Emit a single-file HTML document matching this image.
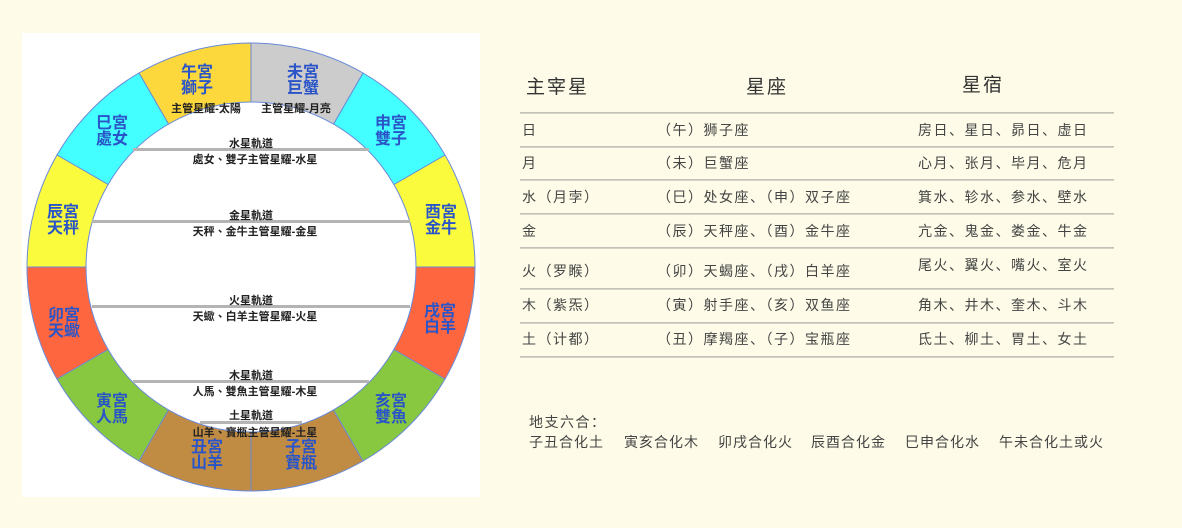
<!DOCTYPE html>
<html><head><meta charset="utf-8"><style>
html,body{margin:0;padding:0}
body{width:1182px;height:528px;background:#fefce8;position:relative;overflow:hidden;font-family:"Liberation Sans","Noto Sans CJK SC",sans-serif}
.wb{position:absolute;left:22px;top:33px;width:458px;height:464px;background:#fff}
svg{position:absolute;left:0;top:0}
.t{position:absolute;color:#444;font-size:14px;white-space:nowrap;letter-spacing:1.5px;font-family:"Liberation Sans","Noto Sans CJK SC",sans-serif}
.b{position:absolute;color:#444;font-size:14px;white-space:nowrap;letter-spacing:1px;top:432px}
.h{position:absolute;font-size:19px;color:#333;letter-spacing:2px;font-family:"Liberation Sans","Noto Sans CJK SC",sans-serif}
.ln{position:absolute;left:520px;width:594px;height:2px;background:linear-gradient(#b8b8b0,#e0ded0)}
</style></head><body>
<div class="wb"></div>
<svg width="500" height="528" viewBox="0 0 500 528" font-family="Liberation Sans, Noto Sans CJK TC, sans-serif">
<g stroke="#6a8ad8" stroke-width="1">
<path d="M475,267 A224,224 0 0 0 445,155 L393.9,184.5 A165,165 0 0 1 416,267Z" fill="#fbfb3e"/>
<path d="M445,155 A224,224 0 0 0 363,73 L333.5,124.1 A165,165 0 0 1 393.9,184.5Z" fill="#44ffff"/>
<path d="M363,73 A224,224 0 0 0 251,43 L251,102 A165,165 0 0 1 333.5,124.1Z" fill="#cccccc"/>
<path d="M251,43 A224,224 0 0 0 139,73 L168.5,124.1 A165,165 0 0 1 251,102Z" fill="#fdd83c"/>
<path d="M139,73 A224,224 0 0 0 57,155 L108.1,184.5 A165,165 0 0 1 168.5,124.1Z" fill="#44ffff"/>
<path d="M57,155 A224,224 0 0 0 27,267 L86,267 A165,165 0 0 1 108.1,184.5Z" fill="#fbfb3e"/>
<path d="M27,267 A224,224 0 0 0 57,379 L108.1,349.5 A165,165 0 0 1 86,267Z" fill="#fe6640"/>
<path d="M57,379 A224,224 0 0 0 139,461 L168.5,409.9 A165,165 0 0 1 108.1,349.5Z" fill="#88c840"/>
<path d="M139,461 A224,224 0 0 0 251,491 L251,432 A165,165 0 0 1 168.5,409.9Z" fill="#c08c44"/>
<path d="M251,491 A224,224 0 0 0 363,461 L333.5,409.9 A165,165 0 0 1 251,432Z" fill="#c08c44"/>
<path d="M363,461 A224,224 0 0 0 445,379 L393.9,349.5 A165,165 0 0 1 333.5,409.9Z" fill="#88c840"/>
<path d="M445,379 A224,224 0 0 0 475,267 L416,267 A165,165 0 0 1 393.9,349.5Z" fill="#fe6640"/>
</g>
<g fill="#b4b4b4">
<rect x="133" y="148" width="236" height="3"/>
<rect x="92" y="220" width="318" height="3"/>
<rect x="92" y="305" width="318" height="3"/>
<rect x="133" y="380" width="236" height="3"/>
<rect x="200" y="421" width="102" height="3"/>
</g>
<g fill="#2a55c8" font-size="16" font-weight="bold" text-anchor="middle">
<text x="441" y="217">酉宮</text><text x="441" y="233">金牛</text>
<text x="391" y="128">申宮</text><text x="391" y="144">雙子</text>
<text x="303" y="77">未宮</text><text x="303" y="93">巨蟹</text>
<text x="197" y="77">午宮</text><text x="197" y="93">獅子</text>
<text x="112" y="128">巳宮</text><text x="112" y="144">處女</text>
<text x="63" y="217">辰宮</text><text x="63" y="233">天秤</text>
<text x="64" y="320">卯宮</text><text x="64" y="336">天蠍</text>
<text x="112" y="406">寅宮</text><text x="112" y="422">人馬</text>
<text x="207" y="452">丑宮</text><text x="207" y="468">山羊</text>
<text x="301" y="452">子宮</text><text x="301" y="468">寶瓶</text>
<text x="391" y="406">亥宮</text><text x="391" y="422">雙魚</text>
<text x="440" y="316">戌宮</text><text x="440" y="332">白羊</text>
</g>
<g fill="#222" font-size="11" font-weight="bold" text-anchor="middle">
<text x="206" y="112">主管星耀-太陽</text><text x="296" y="112">主管星耀-月亮</text>
<text x="251" y="147">水星軌道</text><text x="255" y="163">處女、雙子主管星耀-水星</text>
<text x="251" y="219">金星軌道</text><text x="255" y="235">天秤、金牛主管星耀-金星</text>
<text x="251" y="304">火星軌道</text><text x="255" y="320">天蠍、白羊主管星耀-火星</text>
<text x="251" y="379">木星軌道</text><text x="255" y="395">人馬、雙魚主管星耀-木星</text>
<text x="251" y="419">土星軌道</text><text x="255" y="436">山羊、寶瓶主管星耀-土星</text>
</g>
</svg>

<div class="h" style="left:526px;top:72px">主宰星</div>
<div class="h" style="left:746px;top:72px">星座</div>
<div class="h" style="left:962px;top:70px">星宿</div>

<div class="ln" style="top:112px"></div>
<div class="ln" style="top:146px"></div>
<div class="ln" style="top:179px"></div>
<div class="ln" style="top:213px"></div>
<div class="ln" style="top:247px"></div>
<div class="ln" style="top:288px"></div>
<div class="ln" style="top:322px"></div>
<div class="ln" style="top:356px"></div>

<div class="t" style="left:522px;top:120px">日</div>
<div class="t" style="left:657px;top:120px">（午）狮子座</div>
<div class="t" style="left:918px;top:120px">房日、星日、昴日、虚日</div>

<div class="t" style="left:522px;top:153px">月</div>
<div class="t" style="left:657px;top:153px">（未）巨蟹座</div>
<div class="t" style="left:918px;top:153px">心月、张月、毕月、危月</div>

<div class="t" style="left:522px;top:187px">水（月孛）</div>
<div class="t" style="left:657px;top:187px">（巳）处女座、（申）双子座</div>
<div class="t" style="left:918px;top:187px">箕水、轸水、参水、壁水</div>

<div class="t" style="left:522px;top:221px">金</div>
<div class="t" style="left:657px;top:221px">（辰）天秤座、（酉）金牛座</div>
<div class="t" style="left:918px;top:221px">亢金、鬼金、娄金、牛金</div>

<div class="t" style="left:522px;top:261px">火（罗睺）</div>
<div class="t" style="left:657px;top:261px">（卯）天蝎座、（戌）白羊座</div>
<div class="t" style="left:918px;top:255px">尾火、翼火、嘴火、室火</div>

<div class="t" style="left:522px;top:295px">木（紫炁）</div>
<div class="t" style="left:657px;top:295px">（寅）射手座、（亥）双鱼座</div>
<div class="t" style="left:918px;top:295px">角木、井木、奎木、斗木</div>

<div class="t" style="left:522px;top:329px">土（计都）</div>
<div class="t" style="left:657px;top:329px">（丑）摩羯座、（子）宝瓶座</div>
<div class="t" style="left:918px;top:329px">氐土、柳土、胃土、女土</div>

<div class="t" style="left:529px;top:412px">地支六合：</div>
<div class="b" style="left:529px">子丑合化土</div>
<div class="b" style="left:624px">寅亥合化木</div>
<div class="b" style="left:718px">卯戌合化火</div>
<div class="b" style="left:811px">辰酉合化金</div>
<div class="b" style="left:905px">巳申合化水</div>
<div class="b" style="left:999px">午未合化土或火</div>
</body></html>
